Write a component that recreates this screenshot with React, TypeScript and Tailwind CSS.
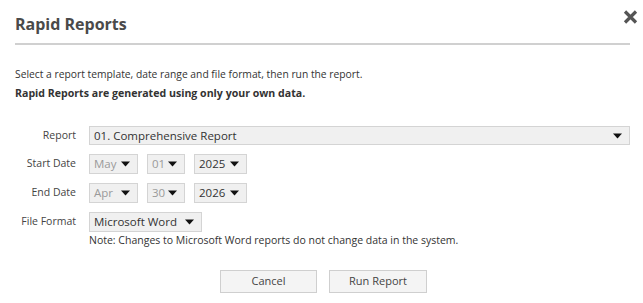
import React from 'react';

function Caret() {
	return (
		<svg width="9" height="6" viewBox="0 0 9 6" className="shrink-0">
			<path d="M0 0.5 L9 0.5 L4.5 5.5 Z" fill="#111" />
		</svg>
	);
}

type SelectProps = {
	value: string;
	width: string;
	muted?: boolean;
	height?: string;
};

function FakeSelect({ value, width, muted, height = 'h-[20px]' }: SelectProps) {
	return (
		<div
			className={`${width} ${height} flex items-center justify-between border border-[#d4d4d4] bg-[#f0f0f0] pl-[4px] pr-[7px] text-[11.5px] ${
				muted ? 'text-[#9a9a9a]' : 'text-[#333]'
			}`}
		>
			<span className="leading-none">{value}</span>
			<Caret />
		</div>
	);
}

function Row({ label, children }: { label: string; children: React.ReactNode }) {
	return (
		<div className="flex items-center">
			<div className="w-[76px] text-right text-[10.5px] text-[#444]">{label}</div>
			<div className="ml-[13px] flex items-center gap-[9px]">{children}</div>
		</div>
	);
}

export default function App() {
	return (
		<div
			className="h-[303px] w-[643px] bg-white"
			style={{ fontFamily: '"Open Sans", "Noto Sans", sans-serif' }}
		>
			<div className="flex items-start justify-between pl-[15px] pr-[5px] pt-[13px]">
				<h1 className="text-[16px] font-bold leading-[22px] text-[#4a4a4a]">Rapid Reports</h1>
				<svg width="15" height="14" viewBox="0 0 15 14" className="mt-[-3px]">
					<path d="M2 1.5 L13 12.5 M13 1.5 L2 12.5" stroke="#555" strokeWidth="3.2" />
				</svg>
			</div>
			<div className="ml-[15px] mt-[8px] h-[2px] w-[615px] bg-[#d0d0d0]" />

			<div className="px-[15px] pt-[20px] text-[10.3px] text-[#333]">
				<p className="leading-[18px]">
					Select a report template, date range and file format, then run the report.
				</p>
				<p className="mt-[1px] text-[10.6px] font-bold leading-[18px]">
					Rapid Reports are generated using only your own data.
				</p>
			</div>

			<div className="mt-[24px] flex flex-col gap-[9px]">
				<Row label="Report">
					<FakeSelect value="01. Comprehensive Report" width="w-[541px]" height="h-[19px]" />
				</Row>
				<Row label="Start Date">
					<FakeSelect value="May" width="w-[49px]" muted />
					<FakeSelect value="01" width="w-[38px]" muted />
					<FakeSelect value="2025" width="w-[53px]" />
				</Row>
				<Row label="End Date">
					<FakeSelect value="Apr" width="w-[49px]" muted />
					<FakeSelect value="30" width="w-[38px]" muted />
					<FakeSelect value="2026" width="w-[53px]" />
				</Row>
				<div>
					<Row label="File Format">
						<FakeSelect value="Microsoft Word" width="w-[113px]" />
					</Row>
					<p className="ml-[89px] text-[10.5px] leading-[16px] text-[#333]">
						Note: Changes to Microsoft Word reports do not change data in the system.
					</p>
				</div>
			</div>

			<div className="mt-[22px] flex justify-center gap-[12px] pl-[4px]">
				<button className="h-[23px] w-[97px] border border-[#cfcfcf] bg-[#f4f4f4] text-[11px] text-[#444]">
					Cancel
				</button>
				<button className="h-[23px] w-[98px] border border-[#cfcfcf] bg-[#f4f4f4] text-[11px] text-[#444]">
					Run Report
				</button>
			</div>
		</div>
	);
}
